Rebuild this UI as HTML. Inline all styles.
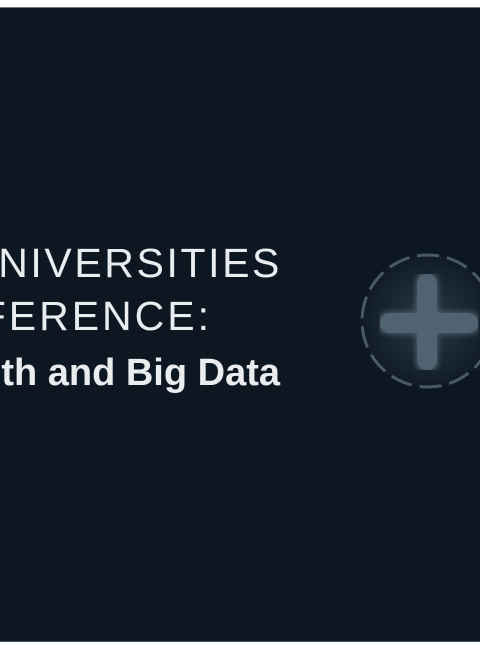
<!DOCTYPE html>
<html><head><style>
html,body{margin:0;padding:0;background:#fff;width:480px;height:650px;overflow:hidden}
.bg{position:absolute;left:0;top:7px;width:480px;height:635px;background:#0c1722;overflow:hidden;border-top:1px solid #6b7480;border-bottom:1px solid #4a5560;box-sizing:border-box}
.t{position:absolute;color:#e9edf0;font-family:"Liberation Sans",sans-serif;white-space:nowrap;line-height:1}
</style></head><body>
<div class="bg">
<div class="t" style="right:198px;top:235px;font-size:41px;letter-spacing:2.6px">NIVERSITIES</div>
<div class="t" style="right:268px;top:288px;font-size:41px;letter-spacing:3px">FERENCE:</div>
<div class="t" style="right:200px;top:346px;font-size:38px;font-weight:bold">th and Big Data</div>
<svg style="position:absolute;left:340px;top:225px" width="140" height="180" viewBox="340 232 140 180">
<defs><radialGradient id="g" cx="50%" cy="50%" r="50%"><stop offset="0" stop-color="#2a3a45"/><stop offset="1" stop-color="#101b26"/></radialGradient>
<filter id="b"><feGaussianBlur stdDeviation="3"/></filter></defs>
<circle cx="428" cy="320" r="66" fill="url(#g)" stroke="#4a5a64" stroke-width="3" stroke-dasharray="22 8"/>
<g stroke="#6a8290" stroke-width="22" stroke-linecap="round" filter="url(#b)" opacity="0.6"><line x1="388" y1="322" x2="470" y2="322"/><line x1="427" y1="281" x2="427" y2="361"/></g>
<g stroke="#4f6470" stroke-width="20" stroke-linecap="round"><line x1="390" y1="322" x2="468" y2="322"/><line x1="427" y1="283" x2="427" y2="359"/></g>
</svg>
</div>
</body></html>
